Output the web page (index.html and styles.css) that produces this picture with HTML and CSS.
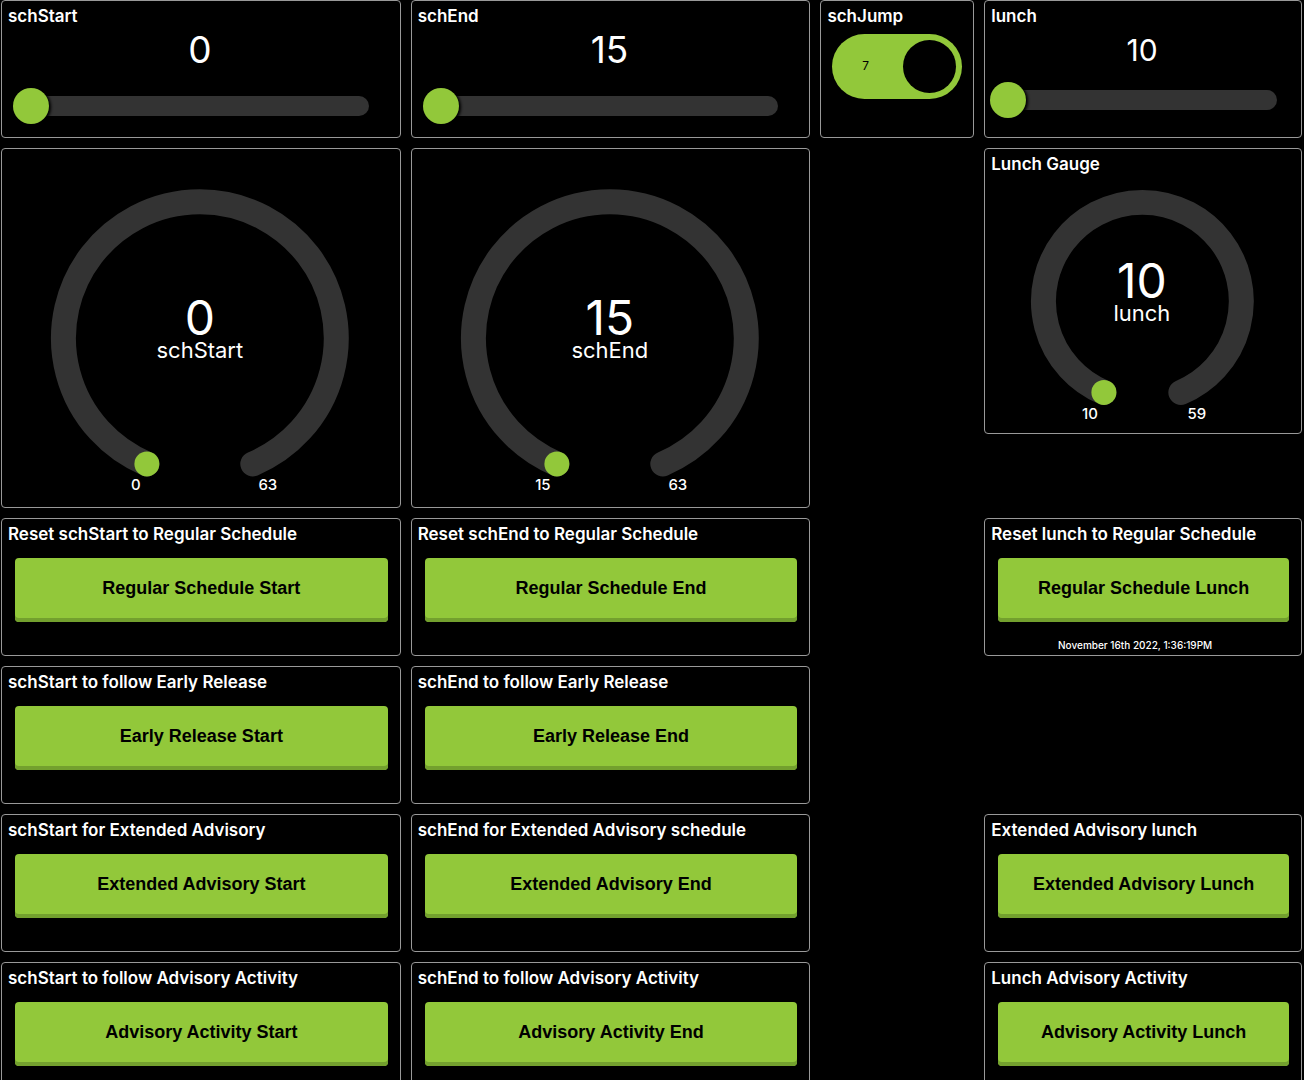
FILE: index.html
```html
<!DOCTYPE html>
<html lang="en">
<head>
<meta charset="utf-8">
<meta name="viewport" content="width=device-width, initial-scale=1">
<title>Bell schedule dashboard</title>
<link rel="stylesheet" href="styles.css">
</head>
<body>
<main class="dashboard">
  <section class="tile start">
    <label class="title" for="start">schStart</label>
    <output class="value" for="start">0</output>
    <input class="slider" id="start" type="range" min="0" max="63" value="0">
  </section>
  <section class="tile end">
    <label class="title" for="end">schEnd</label>
    <output class="value" for="end">15</output>
    <input class="slider" id="end" type="range" min="15" max="63" value="15">
  </section>
  <section class="tile jump">
    <label class="title" for="jump">schJump</label>
    <div class="switch">
      <input class="switch-input" id="jump" type="checkbox" checked>
      <span class="switch-text">7</span>
    </div>
  </section>
  <section class="tile lunch compact">
    <label class="title" for="lunch">lunch</label>
    <output class="value" for="lunch">10</output>
    <input class="slider" id="lunch" type="range" min="10" max="59" value="10">
  </section>

  <section class="tile start tall">
    <svg class="gauge" viewBox="0 0 398 358" role="img" aria-label="schStart gauge">
      <path class="arc" d="M145 315A136.5 136.5 0 1 1 251 315"/>
      <circle class="dot" cx="145" cy="315" r="12.5"/>
      <text class="reading" x="198" y="186">0</text>
      <text class="name" x="198" y="209">schStart</text>
      <text class="limit" x="134" y="341">0</text>
      <text class="limit" x="266" y="341">63</text>
    </svg>
  </section>
  <section class="tile end tall">
    <svg class="gauge" viewBox="0 0 398 358" role="img" aria-label="schEnd gauge">
      <path class="arc" d="M145 315A136.5 136.5 0 1 1 251 315"/>
      <circle class="dot" cx="145" cy="315" r="12.5"/>
      <text class="reading" x="198" y="186">15</text>
      <text class="name" x="198" y="209">schEnd</text>
      <text class="limit" x="131" y="341">15</text>
      <text class="limit" x="266" y="341">63</text>
    </svg>
  </section>
  <section class="tile lunch medium">
    <h2 class="title">Lunch Gauge</h2>
    <svg class="gauge" viewBox="0 0 316 258" role="img" aria-label="Lunch gauge">
      <path class="arc" d="M119 218A99 99 0 1 1 196 218"/>
      <circle class="dot" cx="119" cy="218" r="12.5"/>
      <text class="reading" x="157" y="124">10</text>
      <text class="name" x="157" y="147">lunch</text>
      <text class="limit" x="105" y="245">10</text>
      <text class="limit" x="212" y="245">59</text>
    </svg>
  </section>

  <section class="tile start regular">
    <h2 class="title">Reset schStart to Regular Schedule</h2>
    <button class="action" type="button">Regular Schedule Start</button>
  </section>
  <section class="tile end regular">
    <h2 class="title">Reset schEnd to Regular Schedule</h2>
    <button class="action" type="button">Regular Schedule End</button>
  </section>
  <section class="tile lunch regular">
    <h2 class="title">Reset lunch to Regular Schedule</h2>
    <button class="action" type="button">Regular Schedule Lunch</button>
    <p class="stamp">November 16th 2022, 1:36:19PM</p>
  </section>

  <section class="tile start early">
    <h2 class="title">schStart to follow Early Release</h2>
    <button class="action" type="button">Early Release Start</button>
  </section>
  <section class="tile end early">
    <h2 class="title">schEnd to follow Early Release</h2>
    <button class="action" type="button">Early Release End</button>
  </section>

  <section class="tile start extended">
    <h2 class="title">schStart for Extended Advisory</h2>
    <button class="action" type="button">Extended Advisory Start</button>
  </section>
  <section class="tile end extended">
    <h2 class="title">schEnd for Extended Advisory schedule</h2>
    <button class="action" type="button">Extended Advisory End</button>
  </section>
  <section class="tile lunch extended">
    <h2 class="title">Extended Advisory lunch</h2>
    <button class="action" type="button">Extended Advisory Lunch</button>
  </section>

  <section class="tile start activity">
    <h2 class="title">schStart to follow Advisory Activity</h2>
    <button class="action" type="button">Advisory Activity Start</button>
  </section>
  <section class="tile end activity">
    <h2 class="title">schEnd to follow Advisory Activity</h2>
    <button class="action" type="button">Advisory Activity End</button>
  </section>
  <section class="tile lunch activity">
    <h2 class="title">Lunch Advisory Activity</h2>
    <button class="action" type="button">Advisory Activity Lunch</button>
  </section>
</main>
</body>
</html>
```
FILE: styles.css
```css
:root {
  --green: #92c83a;
  --green-dark: #73a02e;
  --track: #333;
  --line: #999;
}

* { box-sizing: border-box; }

body {
  margin: 0;
  background: #000;
  color: #fff;
  font-family: Inter, Lato, sans-serif;
}

/* The dashboard scrolls inside the window, with its scrollbar hidden. */
.dashboard {
  display: grid;
  grid-template-columns: repeat(16, minmax(0, 1fr));
  grid-auto-rows: 64px;
  gap: 10px;
  height: 100vh;
  padding: 0 2px 0 1px;
  overflow-y: auto;
  scrollbar-width: none;
}

.tile {
  display: flex;
  flex-direction: column;
  grid-row: 1 / span 2;
  border: 1px solid var(--line);
  border-radius: 4px;
}

.start { grid-column: 1 / span 5; }
.end { grid-column: 6 / span 5; }
.jump { grid-column: 11 / span 2; }
.lunch { grid-column: 13 / span 4; }

.tall { grid-row: 3 / span 5; }
.medium { grid-row: 3 / span 4; }
.regular { grid-row: 8 / span 2; }
.early { grid-row: 10 / span 2; }
.extended { grid-row: 12 / span 2; }
.activity { grid-row: 14 / span 2; }

.title {
  margin: 0;
  padding: 5px 6px 0;
  font-size: 17px;
  font-weight: 600;
  line-height: 20px;
  white-space: nowrap;
}

/* Sliders */
.value {
  margin-right: 2px;
  font-size: 37px;
  line-height: 48px;
  text-align: center;
}

.slider {
  appearance: none;
  height: 36px;
  margin: 14px 31px 0 11px;
  background: none;
}

.slider::-webkit-slider-runnable-track {
  height: 20px;
  background: var(--track);
  border-radius: 10px;
}

.slider::-webkit-slider-thumb {
  appearance: none;
  width: 36px;
  height: 36px;
  margin-top: -8px;
  background: var(--green);
  border-radius: 50%;
  box-shadow: 1px 1px 3px 1px #000;
}

.compact .value { font-size: 30px; }
.compact .slider { margin: 8px 24px 0 5px; }

/* Switch */
.switch {
  position: relative;
  align-self: center;
  width: 130px;
  height: 65px;
  margin-top: 8px;
}

.switch-input {
  appearance: none;
  display: flex;
  justify-content: flex-end;
  width: 100%;
  height: 100%;
  margin: 0;
  padding: 6px;
  background: var(--green);
  border-radius: 33px;
}

.switch-input::before {
  content: "";
  width: 53px;
  height: 53px;
  background: #000;
  border-radius: 50%;
}

.switch-text {
  position: absolute;
  top: 24px;
  left: 30px;
  color: #000;
  font-size: 12px;
  line-height: 16px;
  pointer-events: none;
}

/* Gauges */
.gauge {
  flex: 1;
  width: 100%;
  min-height: 0;
  fill: #fff;
  text-anchor: middle;
}

.arc {
  fill: none;
  stroke: var(--track);
  stroke-width: 25px;
  stroke-linecap: round;
}

.dot { fill: var(--green); }
.reading { font-size: 48px; }
.name { font-size: 22px; }
.limit { font-size: 15px; font-weight: 500; }

/* Buttons */
.action {
  height: 64px;
  margin: 14px 12px 0 13px;
  padding: 0 0 4px;
  background: var(--green);
  border: 0;
  border-radius: 4px;
  box-shadow: inset 0 -4px var(--green-dark);
  color: #000;
  font: 700 18px "Liberation Sans", Arial, sans-serif;
}

.stamp {
  margin: auto 16px 4px 0;
  font-size: 10px;
  font-weight: 500;
  line-height: 12px;
  text-align: center;
}
```
